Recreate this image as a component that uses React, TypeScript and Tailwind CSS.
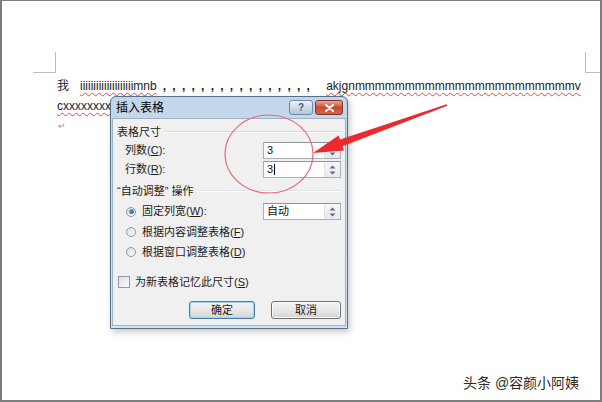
import React from "react";

const CJK = "font-['Liberation_Sans','Noto_Sans_CJK_SC',sans-serif]";

function SpinArrows() {
  return (
    <div className="w-[16px] flex flex-col items-center justify-center gap-[2px] border-l border-[#e2e2e2] bg-gradient-to-b from-[#f7f7f7] to-[#e9e9e9]">
      <svg width="7" height="4" viewBox="0 0 7 4"><path d="M0.5 3.5 L3.5 0.5 L6.5 3.5 Z" fill="#5a6c84" /></svg>
      <svg width="7" height="4" viewBox="0 0 7 4"><path d="M0.5 0.5 L3.5 3.5 L6.5 0.5 Z" fill="#5a6c84" /></svg>
    </div>
  );
}

function SpinBox({ children }: { children: React.ReactNode }) {
  return (
    <div className="flex w-[78px] h-[17px] border border-[#a9b0b8] border-t-[#8c949c] bg-white">
      <div className="flex-1 flex items-center pl-[3px] text-[11px] text-[#111]">{children}</div>
      <SpinArrows />
    </div>
  );
}

function Radio({ checked }: { checked?: boolean }) {
  return (
    <div className="w-[10px] h-[10px] rounded-full border border-[#8e97a2] bg-gradient-to-br from-[#d9dde2] to-[#fbfbfb] flex items-center justify-center">
      {checked && <div className="w-[5px] h-[5px] rounded-full bg-gradient-to-br from-[#6fb1ec] to-[#1d5a99]" />}
    </div>
  );
}

function U({ c }: { c: string }) {
  return <span className="underline underline-offset-1">{c}</span>;
}

export default function App() {
  const commas = Array.from({ length: 16 });
  return (
    <div className={`w-[602px] h-[402px] relative overflow-hidden bg-white border-l-2 border-r-2 border-b-2 border-t border-[#7d7d7d] ${CJK} text-[#1c1c1c]`}>
      {/* crop marks */}
      <div className="flex justify-between items-end h-[72px]">
        <div className="ml-[31px] w-[23px] h-[21px] border-r border-b border-[#bcbcbc]" />
        <div className="w-[15px] h-[21px] border-l border-b border-[#bcbcbc]" />
      </div>

      {/* document text */}
      <div className="mt-[3px] pl-[55px] text-[12px] leading-[20px] whitespace-nowrap">
        <div className="flex items-center">
          <span className="mr-[11px] text-[12px]">我</span>
          <span className="underline decoration-wavy decoration-[#e04848] decoration-1 underline-offset-2">iiiiiiiiiiiiiiiiiiiimnb</span>
          <span className="flex ml-[6px] font-bold">
            {commas.map((_, i) => (
              <span key={i} className="w-[9.6px]">,</span>
            ))}
          </span>
          <span className="ml-[10px] underline decoration-wavy decoration-[#e04848] decoration-1 underline-offset-2">akjgnmmmmmmmmmmmmmmmmmmmmmmv</span>
        </div>
        <div>
          <span className="underline decoration-wavy decoration-[#e04848] decoration-1 underline-offset-2">cxxxxxxxxx</span>
        </div>
        <div className="text-[9px] text-[#9a9a9a] pl-[1px]">↵</div>
      </div>

      {/* dialog */}
      <div className="absolute left-[108px] top-[95px] w-[238px] h-[233px] rounded-t-[6px] border border-[#56708a] bg-gradient-to-b from-[#c2d6ea] to-[#d5e3f0] flex flex-col shadow-[2px_3px_6px_rgba(0,0,0,0.22)]">
        <div className="h-[21px] flex items-center pl-[5px] pr-[4px] shrink-0">
          <span className="text-[12px] text-black">插入表格</span>
          <div className="ml-auto flex gap-[2px]">
            <div className="w-[24px] h-[15px] rounded-[3px] border border-[#6e8aa5] bg-gradient-to-b from-[#eef3f8] via-[#cddbe8] to-[#b3c6d9] flex items-center justify-center text-[10px] font-bold text-[#4b5e73] leading-none">?</div>
            <div className="w-[28px] h-[15px] rounded-[3px] border border-[#7c3526] bg-gradient-to-b from-[#e9a898] via-[#c9492d] to-[#d2674a] flex items-center justify-center">
              <svg width="9" height="8" viewBox="0 0 9 8">
                <path d="M1 1 L8 7 M8 1 L1 7" stroke="#fff" strokeWidth="2" strokeLinecap="round" />
              </svg>
            </div>
          </div>
        </div>

        <div className="mx-[1px] mb-[2px] flex-1 bg-[#f0f0f0] border border-[#9fb3c6] pt-[5px] pl-[4px] pr-[4px] flex flex-col text-[11px]">
          <div className="h-[16px] flex items-center gap-[4px]">
            <span>表格尺寸</span>
            <div className="flex-1 h-[2px] border-t border-[#d4dbe2] border-b border-b-white" />
          </div>
          <div className="mt-[2px] h-[17px] flex items-center pl-[8px]">
            <span>列数(<U c="C" />):</span>
            <div className="ml-auto"><SpinBox>3</SpinBox></div>
          </div>
          <div className="mt-[2px] h-[17px] flex items-center pl-[8px]">
            <span>行数(<U c="R" />):</span>
            <div className="ml-auto">
              <SpinBox>
                <span>3</span>
                <span className="inline-block w-[1px] h-[11px] bg-black ml-[1px]" />
              </SpinBox>
            </div>
          </div>
          <div className="mt-[5px] h-[16px] flex items-center gap-[4px]">
            <span>“自动调整” 操作</span>
            <div className="flex-1 h-[2px] border-t border-[#dfe4e9] border-b border-b-white" />
          </div>
          <div className="mt-[4px] h-[17px] flex items-center pl-[9px]">
            <Radio checked />
            <span className="ml-[6px]">固定列宽(<U c="W" />):</span>
            <div className="ml-auto"><SpinBox>自动</SpinBox></div>
          </div>
          <div className="mt-[4px] h-[16px] flex items-center pl-[9px]">
            <Radio />
            <span className="ml-[6px]">根据内容调整表格(<U c="F" />)</span>
          </div>
          <div className="mt-[4px] h-[16px] flex items-center pl-[9px]">
            <Radio />
            <span className="ml-[6px]">根据窗口调整表格(<U c="D" />)</span>
          </div>
          <div className="mt-[14px] h-[16px] flex items-center pl-[1px]">
            <div className="w-[12px] h-[12px] border border-[#8e97a2] bg-gradient-to-br from-[#dcdfe3] to-[#fafafa]" />
            <span className="ml-[5px]">为新表格记忆此尺寸(<U c="S" />)</span>
          </div>
          <div className="mt-[11px] flex justify-end gap-[16px]">
            <div className="w-[66px] h-[18px] rounded-[3px] border border-[#3c7fb1] shadow-[inset_0_0_0_1px_#9fd4f5] bg-gradient-to-b from-[#f4f4f4] via-[#e8e8e8] to-[#d4d4d4] flex items-center justify-center">确定</div>
            <div className="w-[70px] h-[18px] rounded-[3px] border border-[#707070] shadow-[inset_0_0_0_1px_#fcfcfc] bg-gradient-to-b from-[#f4f4f4] via-[#e8e8e8] to-[#d4d4d4] flex items-center justify-center">取消</div>
          </div>
        </div>
      </div>

      {/* annotations */}
      <svg className="absolute left-[-2px] top-[-1px] pointer-events-none" width="602" height="402" viewBox="0 0 602 402">
        <ellipse cx="269" cy="154" rx="44" ry="39" fill="none" stroke="#e66a78" strokeWidth="1.2" />
        <polygon
          points="313,153 344,150.4 342.5,146.2 447.3,105.8 446.7,104.2 340.1,139.6 338.6,135.4"
          fill="#ea2a2e"
        />
      </svg>

      {/* watermark */}
      <div className="absolute left-[461px] top-[372px] text-[14px] text-[#2b2b2b] [text-shadow:0_0_2px_#fff,1px_1px_1px_#fff] whitespace-nowrap">
        头条 @容颜小阿姨
      </div>
    </div>
  );
}
